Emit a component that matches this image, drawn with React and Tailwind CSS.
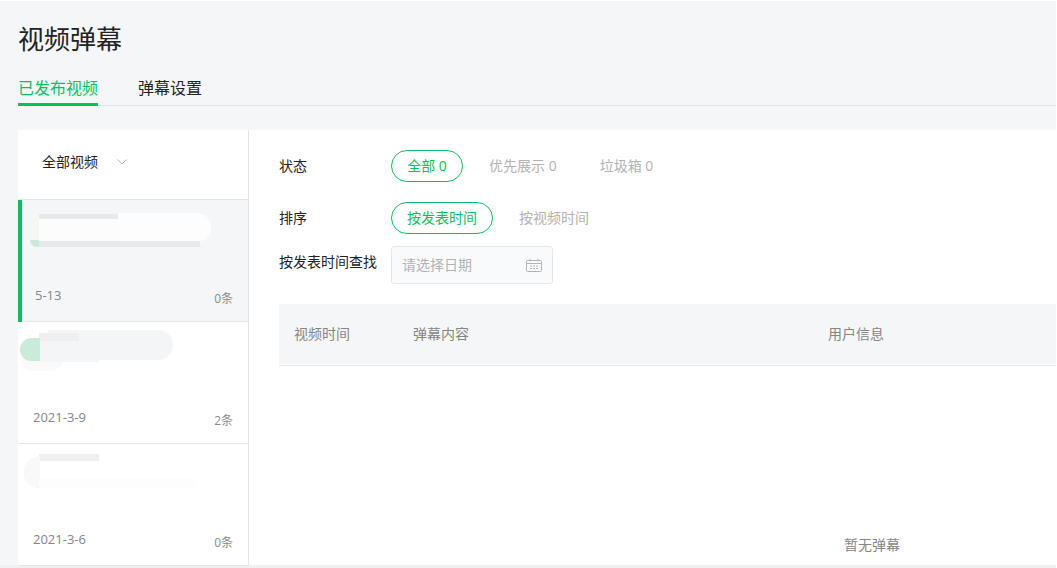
const FONT = "font-['Open_Sans','Noto_Sans_CJK_SC',sans-serif]";

function Blot({ className }) {
  return <div className={`absolute ${className}`} />;
}

function VideoItem({ date, count, active, blots, dateClass }) {
  return (
    <div className={`relative h-[122px] border-b border-[#e6e6e8] ${active ? 'bg-[#f5f6f8]' : 'bg-white'}`}>
      {active && <div className="absolute left-0 top-0 h-[122px] w-1 bg-[#07c160]" />}
      {blots}
      <div className={`absolute bottom-[17px] left-[15px] text-[13px] leading-[18px] text-[#858589] ${dateClass}`}>{date}</div>
      <div className="absolute bottom-[13px] right-[15px] text-[12px] leading-[18px] text-[#8a8a8a]">{count}</div>
    </div>
  );
}

function Pill({ children, w }) {
  return (
    <div className={`flex h-8 items-center justify-center rounded-full border border-[#07c160] pb-[2px] text-[14px] text-[#07c160] ${w}`}>
      {children}
    </div>
  );
}

function CalendarIcon() {
  return (
    <svg width="16" height="14" viewBox="0 0 16 14" fill="none" stroke="#b4b4b8" strokeWidth="1">
      <rect x="0.500" y="2.500" width="15" height="11" rx="1" />
      <path d="M0.500 5.500h15M4 0.500v3M12 0.500v3" />
      <path d="M4 8h2M7 8h2M10 8h2M4 10.500h2M7 10.500h2M10 10.500h2" />
    </svg>
  );
}

export default function App() {
  return (
    <div className={`h-[568px] w-[1057px] overflow-hidden bg-white pt-px ${FONT}`}>
      <div className="flex h-[567px] w-[1056px] flex-col bg-[#f5f6f8]">
        <div className="pl-[18px]">
          <h1 className="pt-[19px] text-[26px] leading-[38px] font-normal text-[#222]">视频弹幕</h1>
          <div className="mt-[14px] flex h-[34px] border-b border-[#e2e2e4] text-[16px] leading-[32px]">
            <div className="h-[34px] w-20 border-b-[3px] border-[#07c160] text-[#07c160]">已发布视频</div>
            <div className="ml-10 text-[#222]">弹幕设置</div>
          </div>
        </div>

        <div className="mt-6 ml-[18px] flex h-[435px] bg-white">
          <div className="w-[231px] shrink-0 border-r border-[#e6e6e8]">
            <div className="flex h-[70px] items-center border-b border-[#e6e6e8] pb-[6px] pl-6 text-[14px] text-[#222]">
              全部视频
              <svg className="ml-[19px]" width="10" height="6" viewBox="0 0 10 6" fill="none" stroke="#b4b4b8" strokeWidth="1">
                <path d="M0.500 0.500 5 5l4.500-4.500" />
              </svg>
            </div>

            <VideoItem
              active
              date="5-13"
              count="0条"
              dateClass="!left-[17px]"
              blots={
                <>
                  <Blot className="left-[10px] top-[15px] h-[32px] w-[12px] rounded-l-[14px] bg-[#f4f7f3]" />
                  <Blot className="left-[12px] top-[40px] h-[7px] w-[10px] rounded-bl-[8px] bg-[#c6ecd8]" />
                  <Blot className="left-[21px] top-[14px] h-[33px] w-[161px] bg-[#e9e9ea]" />
                  <Blot className="left-[21px] top-[19px] h-[22px] w-[172px] rounded-r-[14px] bg-[#fcfcfc]" />
                  <Blot className="left-[100px] top-[13px] h-[28px] w-[93px] rounded-r-[18px] bg-[#fdfdfd]" />
                </>
              }
            />
            <VideoItem
              date="2021-3-9"
              count="2条"
              blots={
                <>
                  <Blot className="left-[4px] top-[31px] h-[18px] w-[40px] rounded-b-[10px] bg-[#fafafa]" />
                  <Blot className="left-[30px] top-[8px] h-[30px] w-[125px] rounded-r-[18px] bg-[#f4f5f7]" />
                  <Blot className="left-[21px] top-[11px] h-[8px] w-[40px] bg-[#efeff0]" />
                  <Blot className="left-[21px] top-[19px] h-[21px] w-[60px] bg-[#f4f5f7]" />
                  <Blot className="left-[2px] top-[16px] h-[23px] w-[20px] rounded-l-[14px] bg-[#c8ecd9]" />
                </>
              }
            />
            <VideoItem
              date="2021-3-6"
              count="0条"
              blots={
                <>
                  <Blot className="left-[21px] top-[10px] h-[7px] w-[60px] bg-[#efeff0]" />
                  <Blot className="left-[6px] top-[13px] h-[31px] w-[16px] rounded-l-[14px] bg-[#f9f9f9]" />
                  <Blot className="left-[21px] top-[34px] h-[9px] w-[156px] bg-[#fdfdfd]" />
                </>
              }
            />
          </div>

          <div className="min-w-0 flex-1 pt-5 pl-[30px] text-[14px] text-[#222]">
            <div className="flex h-8 items-center">
              <div className="w-28 pb-[2px]">状态</div>
              <Pill w="w-[72px]">全部 0</Pill>
              <div className="ml-[26px] pb-[2px] text-[#b2b2b2]">优先展示 0</div>
              <div className="ml-[43px] pb-[2px] text-[#b2b2b2]">垃圾箱 0</div>
            </div>
            <div className="mt-5 flex h-8 items-center">
              <div className="w-28 pb-[2px]">排序</div>
              <Pill w="w-[102px]">按发表时间</Pill>
              <div className="ml-[26px] pb-[2px] text-[#b2b2b2]">按视频时间</div>
            </div>
            <div className="mt-3 flex">
              <div className="w-28 pt-[5px]">按发表时间查找</div>
              <div className="flex h-[38px] w-[162px] items-center justify-between rounded-[3px] border border-[#e6e6e8] bg-[#f9fafc] px-[10px] text-[#b2b2b2]">
                <span className="pb-[2px]">请选择日期</span>
                <CalendarIcon />
              </div>
            </div>

            <div className="mt-5 flex h-[62px] items-center border-b border-[#e6e6e8] bg-[#f5f6f8] pb-[2px] text-[#858585] shadow-[inset_0_-1px_0_#fff]">
              <div className="w-[134px] pl-[15px]">视频时间</div>
              <div className="w-[415px]">弹幕内容</div>
              <div>用户信息</div>
            </div>
            <div className="pt-[168px] pl-[565px] text-[#858585]">暂无弹幕</div>
          </div>
        </div>
        <div className="flex-1 bg-[#f0f0f0]" />
      </div>
    </div>
  );
}
